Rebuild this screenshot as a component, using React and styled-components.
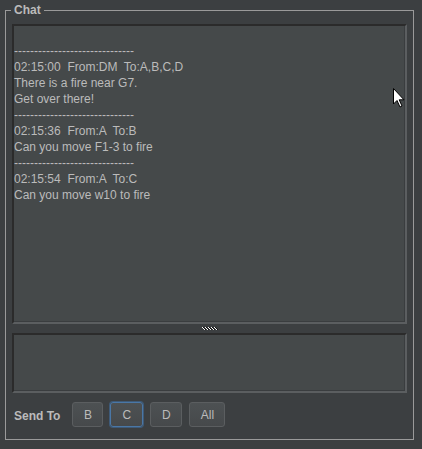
import React from "react"
import styled, { createGlobalStyle } from "styled-components"

const GlobalStyle = createGlobalStyle`
  html, body {
    margin: 0;
    padding: 0;
    background: #3c3f41;
  }
  body {
    width: 422px;
    height: 449px;
    overflow: hidden;
    font-family: "Liberation Sans", Arial, sans-serif;
    font-size: 12px;
    color: #bbbbbb;
  }
`

const Page = styled.div`
  position: relative;
  padding: 3px 6px 0 5px;
  height: 446px;
`

const Frame = styled.fieldset`
  margin: 0;
  padding: 7px 6px 11px 6px;
  border: 1px solid #9a9a9a;
  width: 409px;
  box-sizing: border-box;
  height: 437px;
  display: flex;
  flex-direction: column;
`

const Legend = styled.legend`
  margin-left: -1px;
  padding: 0 3px;
  font-weight: bold;
  font-size: 12px;
  line-height: 14px;
  color: #bbbbbb;
`

const Pane = styled.div`
  background: #45494a;
  border-top: 2px solid #2b2b2b;
  border-left: 2px solid #2b2b2b;
  border-right: 2px solid #5b5e60;
  border-bottom: 2px solid #5b5e60;
  box-shadow: inset -1px -1px 0 #3a3d3f;
  box-sizing: border-box;
  flex-shrink: 0;
  height: ${(p) => p.$h}px;
`

const Log = styled.div`
  padding: 1px 0 0 0;
  line-height: 16px;
  white-space: pre;
  color: #bbbbbb;
`

const Divider = styled.div`
  height: 9px;
  flex-shrink: 0;
  display: flex;
  align-items: center;
  justify-content: center;
`

const Row = styled.div`
  display: flex;
  align-items: center;
  margin-top: 9px;
  height: 25px;
`

const Label = styled.span`
  font-weight: bold;
  color: #bbbbbb;
  margin: 2px 12px 0 2px;
`

const Button = styled.button`
  box-sizing: border-box;
  width: ${(p) => p.$w}px;
  height: 25px;
  margin-right: 7px;
  padding: 0;
  font-family: "Liberation Sans", Arial, sans-serif;
  font-size: 12px;
  color: #bbbbbb;
  background: linear-gradient(#4d5153, #46494b);
  border: 1px solid ${(p) => (p.$focus ? "#4a77a6" : "#5b5e60")};
  box-shadow: ${(p) => (p.$focus ? "0 0 0 1px #3e5a78" : "none")};
  border-radius: 3px;
`

const Cursor = styled.svg`
  position: absolute;
  left: 393px;
  top: 88px;
`

const lines = [
  "",
  "------------------------------",
  "02:15:00  From:DM  To:A,B,C,D",
  "There is a fire near G7.",
  "Get over there!",
  "------------------------------",
  "02:15:36  From:A  To:B",
  "Can you move F1-3 to fire",
  "------------------------------",
  "02:15:54  From:A  To:C",
  "Can you move w10 to fire",
]

const Grip = () => (
  <svg width="16" height="4" viewBox="0 0 16 4">
    {[0, 3, 6, 9, 12].map((x) => (
      <g key={x}>
        <rect x={x} y="0" width="1" height="1" fill="#ffffff" />
        <rect x={x + 1} y="1" width="1" height="1" fill="#ffffff" />
        <rect x={x + 2} y="2" width="1" height="1" fill="#ffffff" />
        <rect x={x + 1} y="0" width="1" height="1" fill="#111" />
        <rect x={x + 2} y="1" width="1" height="1" fill="#111" />
        <rect x={x + 3} y="2" width="1" height="1" fill="#111" />
      </g>
    ))}
  </svg>
)

const App = () => {
  return (
    <Page>
      <GlobalStyle />
      <Frame>
        <Legend>Chat</Legend>
        <Pane $h={300}>
          <Log>{lines.join("\n")}</Log>
        </Pane>
        <Divider>
          <Grip />
        </Divider>
        <Pane $h={60} />
        <Row>
          <Label>Send To</Label>
          <Button $w={31}>B</Button>
          <Button $w={33} $focus>C</Button>
          <Button $w={32}>D</Button>
          <Button $w={36}>All</Button>
        </Row>
      </Frame>
      <Cursor width="13" height="20" viewBox="0 0 13 20">
        <path d="M0.5 0.5 L0.5 16 L4 12.5 L7 19 L9 18 L6.2 11.8 L11 11.8 Z" fill="#fff" stroke="#000" strokeWidth="1" />
      </Cursor>
    </Page>
  )
}

export default App
